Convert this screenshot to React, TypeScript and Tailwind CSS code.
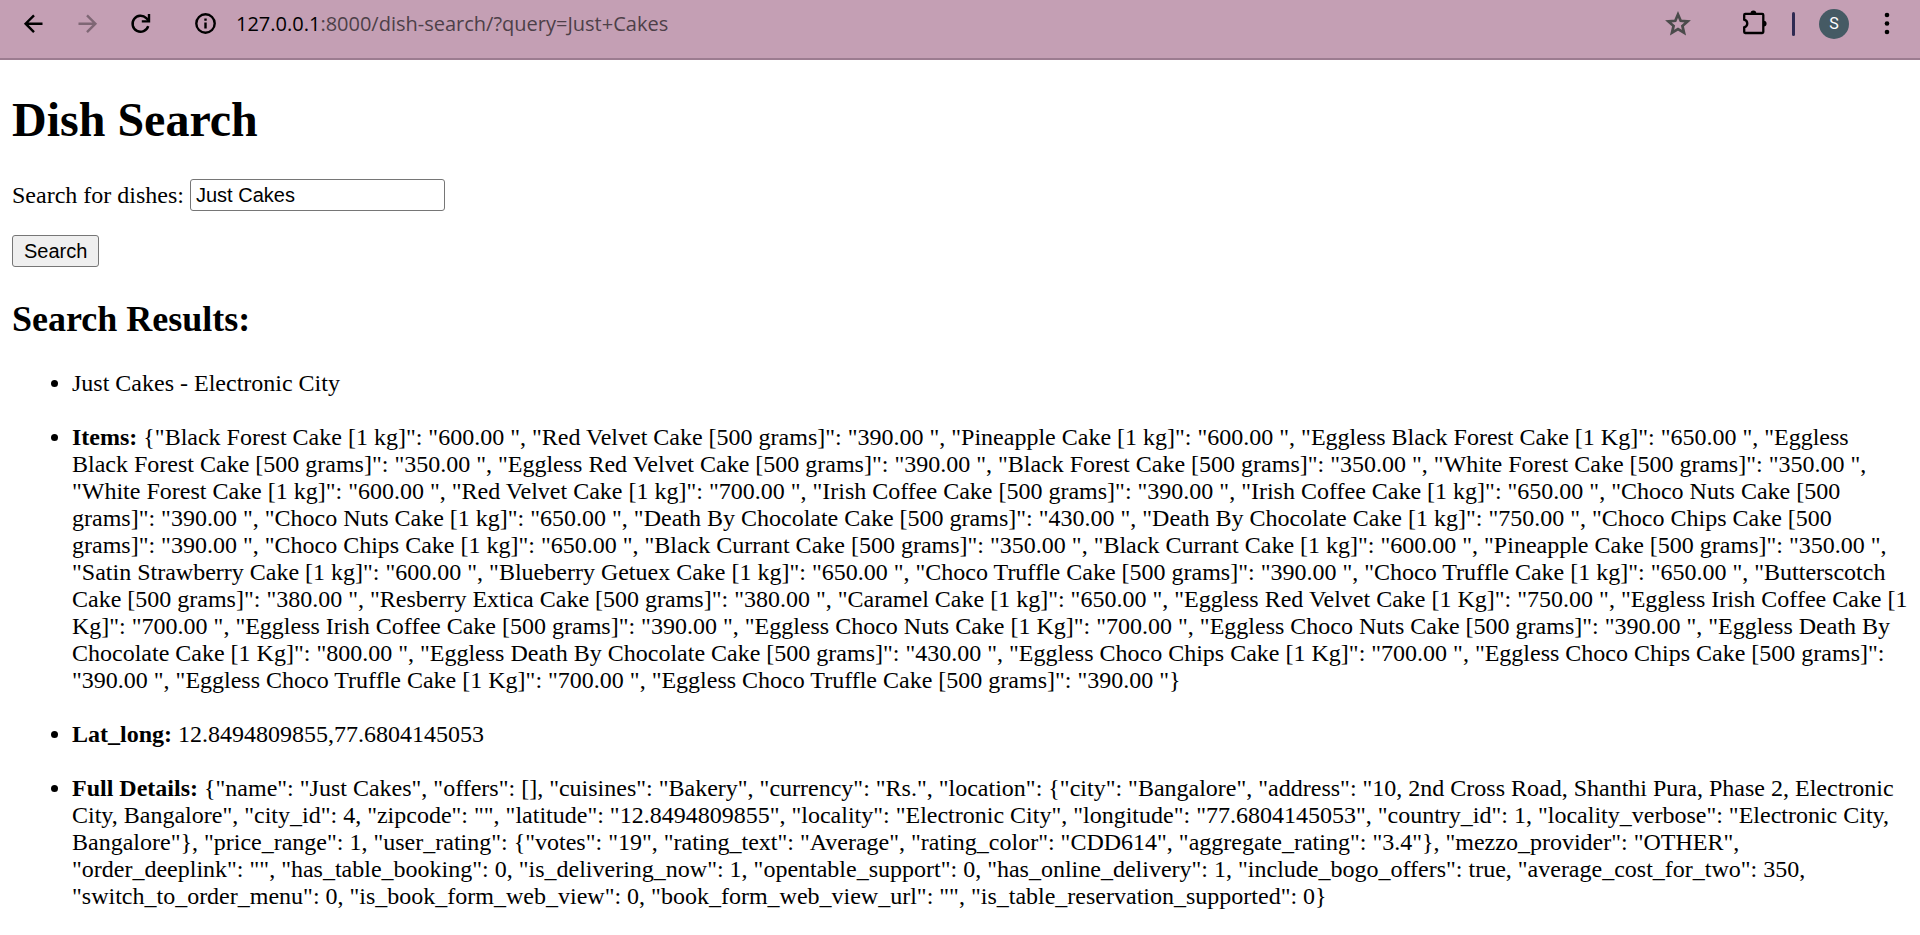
import React, { useState } from "react";

const items: [string, string][] = [
  ["Black Forest Cake [1 kg]", "600.00 "],
  ["Red Velvet Cake [500 grams]", "390.00 "],
  ["Pineapple Cake [1 kg]", "600.00 "],
  ["Eggless Black Forest Cake [1 Kg]", "650.00 "],
  ["Eggless Black Forest Cake [500 grams]", "350.00 "],
  ["Eggless Red Velvet Cake [500 grams]", "390.00 "],
  ["Black Forest Cake [500 grams]", "350.00 "],
  ["White Forest Cake [500 grams]", "350.00 "],
  ["White Forest Cake [1 kg]", "600.00 "],
  ["Red Velvet Cake [1 kg]", "700.00 "],
  ["Irish Coffee Cake [500 grams]", "390.00 "],
  ["Irish Coffee Cake [1 kg]", "650.00 "],
  ["Choco Nuts Cake [500 grams]", "390.00 "],
  ["Choco Nuts Cake [1 kg]", "650.00 "],
  ["Death By Chocolate Cake [500 grams]", "430.00 "],
  ["Death By Chocolate Cake [1 kg]", "750.00 "],
  ["Choco Chips Cake [500 grams]", "390.00 "],
  ["Choco Chips Cake [1 kg]", "650.00 "],
  ["Black Currant Cake [500 grams]", "350.00 "],
  ["Black Currant Cake [1 kg]", "600.00 "],
  ["Pineapple Cake [500 grams]", "350.00 "],
  ["Satin Strawberry Cake [1 kg]", "600.00 "],
  ["Blueberry Getuex Cake [1 kg]", "650.00 "],
  ["Choco Truffle Cake [500 grams]", "390.00 "],
  ["Choco Truffle Cake [1 kg]", "650.00 "],
  ["Butterscotch Cake [500 grams]", "380.00 "],
  ["Resberry Extica Cake [500 grams]", "380.00 "],
  ["Caramel Cake [1 kg]", "650.00 "],
  ["Eggless Red Velvet Cake [1 Kg]", "750.00 "],
  ["Eggless Irish Coffee Cake [1 Kg]", "700.00 "],
  ["Eggless Irish Coffee Cake [500 grams]", "390.00 "],
  ["Eggless Choco Nuts Cake [1 Kg]", "700.00 "],
  ["Eggless Choco Nuts Cake [500 grams]", "390.00 "],
  ["Eggless Death By Chocolate Cake [1 Kg]", "800.00 "],
  ["Eggless Death By Chocolate Cake [500 grams]", "430.00 "],
  ["Eggless Choco Chips Cake [1 Kg]", "700.00 "],
  ["Eggless Choco Chips Cake [500 grams]", "390.00 "],
  ["Eggless Choco Truffle Cake [1 Kg]", "700.00 "],
  ["Eggless Choco Truffle Cake [500 grams]", "390.00 "],
];

const itemsText = "{" + items.map(([name, price]) => `"${name}": "${price}"`).join(", ") + "}";

const details =
  '{"name": "Just Cakes", "offers": [], "cuisines": "Bakery", "currency": "Rs.", "location": {"city": "Bangalore", "address": "10, 2nd Cross Road, Shanthi Pura, Phase 2, Electronic City, Bangalore", "city_id": 4, "zipcode": "", "latitude": "12.8494809855", "locality": "Electronic City", "longitude": "77.6804145053", "country_id": 1, "locality_verbose": "Electronic City, Bangalore"}, "price_range": 1, "user_rating": {"votes": "19", "rating_text": "Average", "rating_color": "CDD614", "aggregate_rating": "3.4"}, "mezzo_provider": "OTHER", "order_deeplink": "", "has_table_booking": 0, "is_delivering_now": 1, "opentable_support": 0, "has_online_delivery": 1, "include_bogo_offers": true, "average_cost_for_two": 350, "switch_to_order_menu": 0, "is_book_form_web_view": 0, "book_form_web_view_url": "", "is_table_reservation_supported": 0}';

function IconButton({ label, className = "", children }: { label: string; className?: string; children: React.ReactNode }) {
  return (
    <button type="button" aria-label={label} className={`flex size-7 shrink-0 items-center justify-center ${className}`}>
      <svg viewBox="0 0 28 28" className="size-7" fill="none" stroke="currentColor" strokeWidth="2.4" aria-hidden="true">
        {children}
      </svg>
    </button>
  );
}

function BrowserBar() {
  return (
    <header className="border-b-2 border-[#9c7c90] bg-[#c49fb4] pt-[9px] pr-[19px] pb-[19px] pl-5 text-black">
      <div className="flex h-[30px] items-center">
        <div className="flex gap-[26px]">
          <IconButton label="Back">
            <path d="M22.5 13.700H6M14 5.300 5.600 13.700l8.400 8.400" />
          </IconButton>
          <IconButton label="Forward" className="text-[#7f6775]">
            <path d="M4.500 13.700H21M13 5.300l8.400 8.400-8.400 8.400" />
          </IconButton>
          <IconButton label="Reload">
            <path d="M20.200 16.200A8 8 0 1 1 18.300 8.200L20.800 10.700" />
            <path d="M21 4v7.400h-7.200" />
          </IconButton>
        </div>
        <IconButton label="Site information" className="ml-[36px]">
          <circle cx="13.500" cy="13.500" r="9.200" />
          <path d="M13.500 12.400v6M13.500 8.400v2.400" />
        </IconButton>
        <div className="ml-4 flex-1 font-['Open_Sans',sans-serif] text-xl leading-7 text-[#4d3f48]">
          <span className="text-black">127.0.0.1</span>:8000/dish-search/?query=Just+Cakes
        </div>
        <IconButton label="Bookmark" className="mr-[48px] text-[#4b4b4b]">
          <path d="m14 4.500 2.700 6.300 6.900.6-5.200 4.500 1.600 6.700-6-3.600-6 3.600 1.600-6.700-5.200-4.500 6.900-.6z" strokeWidth="2.700" />
        </IconButton>
        <IconButton label="Extensions">
          <path
            d="M5.200 3.900H22.300a1 1 0 0 1 1 1V22a1 1 0 0 1-1 1H5.200a1 1 0 0 1-1-1V17.300C8.300 16 8.300 11 4.200 9.700V4.900a1 1 0 0 1 1-1Z"
            strokeWidth="2.300"
          />
          <path d="M10.500 3.500a2.900 2.900 0 0 1 5.800 0zM23.700 10.700a2.900 2.900 0 0 1 0 5.800z" fill="currentColor" stroke="none" />
        </IconButton>
        <span className="mx-6 h-6 w-[3px] rounded-sm bg-[#2f2a52]" />
        <button
          type="button"
          aria-label="Profile"
          className="flex size-[30px] items-center justify-center rounded-full bg-[#455a64] font-['Roboto',sans-serif] text-base text-white"
        >
          S
        </button>
        <IconButton label="Menu" className="ml-6">
          <g fill="currentColor" stroke="none">
            <circle cx="14" cy="5" r="2.300" />
            <circle cx="14" cy="13.500" r="2.300" />
            <circle cx="14" cy="22" r="2.300" />
          </g>
        </IconButton>
      </div>
    </header>
  );
}

export default function App() {
  const [query, setQuery] = useState("Just Cakes");
  return (
    <div className="min-h-screen bg-white font-['Liberation_Serif',serif] text-2xl leading-[27px] text-black">
      <BrowserBar />
      <main className="px-3 pt-[33px]">
        <h1 className="text-5xl leading-[54px] font-bold">Dish Search</h1>
        <form className="mt-8" onSubmit={(e) => e.preventDefault()}>
          <div className="flex items-center gap-[6px]">
            <label htmlFor="query">Search for dishes:</label>
            <input
              id="query"
              type="text"
              value={query}
              onChange={(e) => setQuery(e.target.value)}
              className="h-8 w-[255px] rounded-[3px] border border-[#767676] bg-white px-[5px] font-['Liberation_Sans',sans-serif] text-xl"
            />
          </div>
          <button
            type="submit"
            className="mt-6 flex h-8 items-center rounded-[3px] border border-[#767676] bg-[#efefef] px-[11px] font-['Liberation_Sans',sans-serif] text-xl"
          >
            Search
          </button>
        </form>
        <h2 className="mt-8 text-4xl leading-[41px] font-bold">Search Results:</h2>
        <ul className="mt-[30px] list-disc space-y-[27px] pl-[60px]">
          <li>Just Cakes - Electronic City</li>
          <li>
            <b>Items:</b> {itemsText}
          </li>
          <li>
            <b>Lat_long:</b> 12.8494809855,77.6804145053
          </li>
          <li>
            <b>Full Details:</b> {details}
          </li>
        </ul>
      </main>
    </div>
  );
}
